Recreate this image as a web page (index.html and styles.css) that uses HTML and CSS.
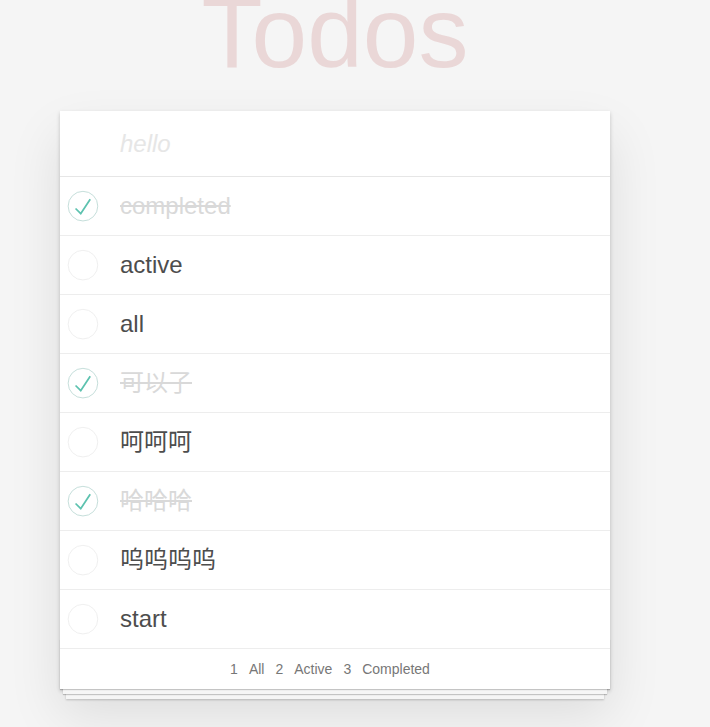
FILE: index.html
```html
<!doctype html>
<html lang="en">
  <head>
    <meta charset="UTF-8" />
    <meta name="viewport" content="width=device-width, initial-scale=1.0" />
    <title>Todos</title>
    <link rel="stylesheet" href="styles.css">
  </head>
  <body>
    <section class="todoapp">
      <h1 class="title">Todos</h1>

      <div class="card">
        <header class="header">
          <input class="new-todo" placeholder="hello" />
        </header>

        <ul class="todo-list">
          <li class="todo completed">
            <span class="toggle">
              <svg width="40" height="40" viewBox="-10 -18 100 135"><circle cx="50" cy="50" r="50" fill="none" stroke="#bddad5" stroke-width="3"/><path fill="#5dc2af" d="M72 25L42 71 27 56l-4 4 20 20 34-52z"/></svg>
            </span>
            <label>completed</label>
          </li>
          <li class="todo">
            <span class="toggle">
              <svg width="40" height="40" viewBox="-10 -18 100 135"><circle cx="50" cy="50" r="50" fill="none" stroke="#ededed" stroke-width="3"/></svg>
            </span>
            <label>active</label>
          </li>
          <li class="todo">
            <span class="toggle">
              <svg width="40" height="40" viewBox="-10 -18 100 135"><circle cx="50" cy="50" r="50" fill="none" stroke="#ededed" stroke-width="3"/></svg>
            </span>
            <label>all</label>
          </li>
          <li class="todo completed">
            <span class="toggle">
              <svg width="40" height="40" viewBox="-10 -18 100 135"><circle cx="50" cy="50" r="50" fill="none" stroke="#bddad5" stroke-width="3"/><path fill="#5dc2af" d="M72 25L42 71 27 56l-4 4 20 20 34-52z"/></svg>
            </span>
            <label>可以了</label>
          </li>
          <li class="todo">
            <span class="toggle">
              <svg width="40" height="40" viewBox="-10 -18 100 135"><circle cx="50" cy="50" r="50" fill="none" stroke="#ededed" stroke-width="3"/></svg>
            </span>
            <label>呵呵呵</label>
          </li>
          <li class="todo completed">
            <span class="toggle">
              <svg width="40" height="40" viewBox="-10 -18 100 135"><circle cx="50" cy="50" r="50" fill="none" stroke="#bddad5" stroke-width="3"/><path fill="#5dc2af" d="M72 25L42 71 27 56l-4 4 20 20 34-52z"/></svg>
            </span>
            <label>哈哈哈</label>
          </li>
          <li class="todo">
            <span class="toggle">
              <svg width="40" height="40" viewBox="-10 -18 100 135"><circle cx="50" cy="50" r="50" fill="none" stroke="#ededed" stroke-width="3"/></svg>
            </span>
            <label>呜呜呜呜</label>
          </li>
          <li class="todo">
            <span class="toggle">
              <svg width="40" height="40" viewBox="-10 -18 100 135"><circle cx="50" cy="50" r="50" fill="none" stroke="#ededed" stroke-width="3"/></svg>
            </span>
            <label>start</label>
          </li>
        </ul>

        <footer class="footer">
          <ul class="filters">
            <li>1</li>
            <li>All</li>
            <li>2</li>
            <li>Active</li>
            <li>3</li>
            <li>Completed</li>
          </ul>
        </footer>
      </div>
    </section>
  </body>
</html>
```

FILE: styles.css
```css
:root {
  --color-background: #f5f5f5;
  --color-text: #4d4d4d;
  --color-done: #d9d9d9;
  --color-line: #ededed;
  --font-sans: "Liberation Sans", "Noto Sans CJK SC", Arial, sans-serif;
}

html,
body {
  margin: 0;
  padding: 0;
}

body {
  font-family: var(--font-sans);
  background: var(--color-background);
  color: var(--color-text);
  min-height: 100vh;
  overflow: hidden;
}

.todoapp {
  width: 550px;
  margin: 0 0 40px 60px;
}

.title {
  margin: -18px 0 29px;
  font-size: 100px;
  font-weight: 100;
  line-height: 100px;
  text-align: center;
  color: rgba(175, 47, 47, 0.15);
}

.card {
  position: relative;
  z-index: 0;
  background: #fff;
  box-shadow: 0 2px 4px rgba(0, 0, 0, 0.2), 0 25px 50px rgba(0, 0, 0, 0.1);
}

.new-todo {
  display: block;
  width: 100%;
  box-sizing: border-box;
  margin: 0;
  padding: 16px 16px 16px 60px;
  border: none;
  outline: none;
  background: transparent;
  font-family: inherit;
  font-size: 24px;
  line-height: 33px;
  color: var(--color-text);
}

.new-todo::placeholder {
  font-style: italic;
  font-weight: 300;
  color: #e6e6e6;
}

.todo-list {
  list-style: none;
  margin: 0;
  padding: 0;
  border-top: 1px solid #e6e6e6;
}

.todo {
  display: flex;
  align-items: center;
  border-bottom: 1px solid var(--color-line);
}

.toggle {
  flex: 0 0 60px;
  display: flex;
  align-items: center;
}

.toggle svg {
  display: block;
}

.todo label {
  flex: 1;
  height: 28px;
  padding: 15px 15px 15px 0;
  font-size: 24px;
  line-height: 28px;
  word-break: break-all;
}

.todo.completed label {
  color: var(--color-done);
  text-decoration: line-through;
}

.footer {
  position: relative;
  height: 20px;
  padding: 10px 15px;
  background: #fff;
  color: #777;
  text-align: center;
  font-size: 14px;
  line-height: 20px;
}

.footer::before {
  content: "";
  position: absolute;
  right: 0;
  bottom: 0;
  left: 0;
  height: 50px;
  overflow: hidden;
  z-index: -1;
  box-shadow: 0 1px 1px rgba(0, 0, 0, 0.2), 0 8px 0 -3px #f6f6f6,
    0 9px 1px -3px rgba(0, 0, 0, 0.2), 0 16px 0 -6px #f6f6f6,
    0 17px 2px -6px rgba(0, 0, 0, 0.2);
}

.filters {
  list-style: none;
  margin: 0 10px 0 0;
  padding: 0;
  display: flex;
  justify-content: center;
  gap: 11px;
}
```
